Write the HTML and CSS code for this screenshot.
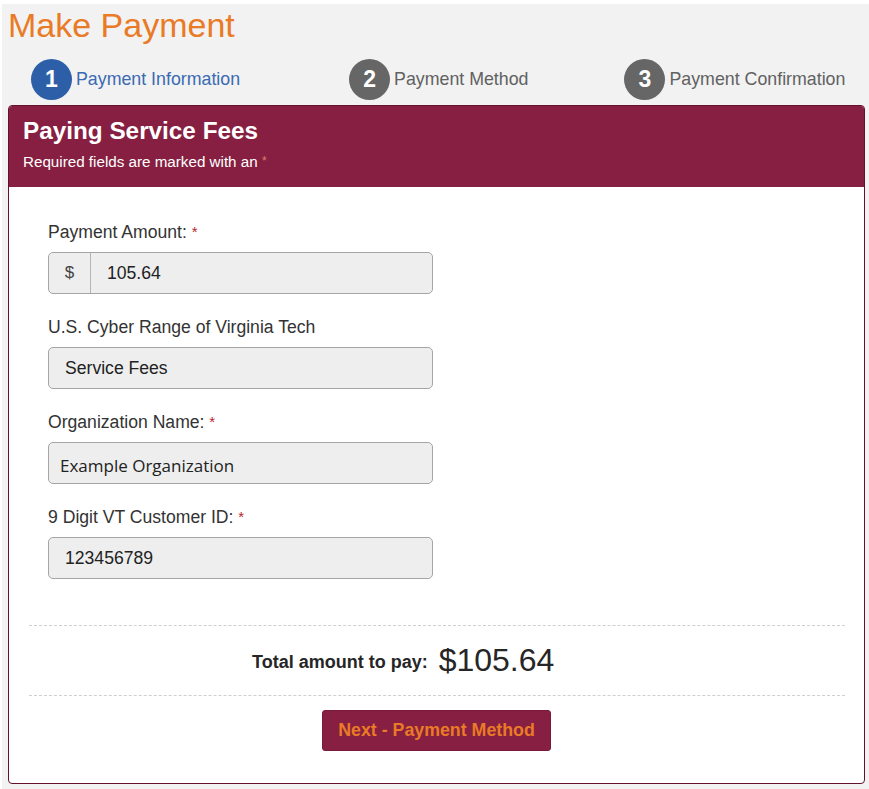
FILE: index.html
```html
<!DOCTYPE html>
<html lang="en">
<head>
    <meta charset="UTF-8">
    <meta name="viewport" content="width=device-width, initial-scale=1.0">
    <title>Make Payment</title>
    <link rel="stylesheet" href="styles.css">
</head>
<body>
    <div id="page">
        <h1>Make Payment</h1>

        <!-- Pasos del pago -->
        <div id="steps">
            <div class="step active">
                <span class="step-num">1</span>
                <span class="step-label">Payment Information</span>
            </div>
            <div class="step step-two">
                <span class="step-num">2</span>
                <span class="step-label">Payment Method</span>
            </div>
            <div class="step step-three">
                <span class="step-num">3</span>
                <span class="step-label">Payment Confirmation</span>
            </div>
        </div>

        <div id="panel">
            <div id="panel-header">
                <h2>Paying Service Fees</h2>
                <p>Required fields are marked with an <span class="req-light">*</span></p>
            </div>

            <div id="panel-body">
                <div class="field">
                    <label>Payment Amount: <span class="req">*</span></label>
                    <div class="input-group">
                        <span class="addon">$</span>
                        <span class="value">105.64</span>
                    </div>
                </div>

                <div class="field">
                    <label>U.S. Cyber Range of Virginia Tech</label>
                    <div class="input-box">Service Fees</div>
                </div>

                <div class="field">
                    <label>Organization Name: <span class="req">*</span></label>
                    <div class="input-box alt-font">Example Organization</div>
                </div>

                <div class="field">
                    <label>9 Digit VT Customer ID: <span class="req">*</span></label>
                    <div class="input-box">123456789</div>
                </div>

                <div id="total">
                    <span class="total-label">Total amount to pay:</span>
                    <span class="total-amount">$105.64</span>
                </div>

                <div id="actions">
                    <button>Next - Payment Method</button>
                </div>
            </div>
        </div>
    </div>
</body>
</html>
```

FILE: styles.css
```css
body {
    font-family: 'Liberation Sans', Arial, sans-serif;
    background-color: #fff;
    margin: 0;
    padding: 0;
}

#page {
    background-color: #f2f2f2;
    margin: 4px 0 0 2px;
    padding: 0 4px 6px 6px;
    min-height: 785px;
    box-sizing: border-box;
}

h1 {
    color: #e97a26;
    font-size: 34px;
    font-weight: normal;
    margin: 0;
    padding-top: 2px;
    line-height: 38px;
}

#steps {
    display: flex;
    align-items: center;
    margin-top: 15px;
    padding-left: 23px;
}

.step {
    display: flex;
    align-items: center;
    color: #616161;
    font-size: 17.8px;
}

.step-two {
    margin-left: 109px;
}

.step-three {
    margin-left: 96px;
}

.step-num {
    width: 41px;
    height: 41px;
    border-radius: 50%;
    background-color: #666;
    color: #fff;
    font-weight: bold;
    font-size: 23px;
    display: flex;
    align-items: center;
    justify-content: center;
    margin-right: 4px;
}

.step.active {
    color: #3a6ab3;
}

.step.active .step-num {
    background-color: #2d5fa8;
}

#panel {
    margin-top: 5px;
    border: 1px solid #66102f;
    border-radius: 4px;
    background-color: #fff;
    overflow: hidden;
}

#panel-header {
    background-color: #861f41;
    color: #fff;
    padding: 11px 14px 16px;
}

#panel-header h2 {
    margin: 0;
    font-size: 24.3px;
    line-height: 28px;
}

#panel-header p {
    margin: 7px 0 0;
    font-size: 15.2px;
    line-height: 19px;
}

.req-light {
    color: #d9826e;
    font-size: 12px;
    vertical-align: top;
}

#panel-body {
    padding: 35px 0 32px;
}

.field {
    margin: 0 0 23px 39px;
    width: 385px;
}

.field label {
    display: block;
    color: #333;
    font-size: 17.6px;
    line-height: 20px;
    margin-bottom: 10px;
}

.req {
    color: #b3262b;
    font-size: 15px;
    vertical-align: top;
}

.input-box,
.input-group {
    height: 42px;
    box-sizing: border-box;
    background-color: #eee;
    border: 1px solid #a5a5a5;
    border-radius: 5px;
    color: #222;
    font-size: 17.6px;
    display: flex;
    align-items: center;
}

.input-box {
    padding-left: 16px;
}

.alt-font {
    font-family: 'Open Sans', sans-serif;
    font-size: 17px;
    padding-left: 11px;
    padding-top: 4px;
}

.addon {
    width: 42px;
    height: 100%;
    border-right: 1px solid #b5b5b5;
    display: flex;
    align-items: center;
    justify-content: center;
    color: #444;
    font-size: 17px;
    box-sizing: border-box;
}

.value {
    padding-left: 16px;
}

#total {
    margin: 46px 19px 0 20px;
    height: 71px;
    box-sizing: border-box;
    border-top: 1px dashed #cfcfcf;
    border-bottom: 1px dashed #cfcfcf;
    display: flex;
    align-items: center;
    padding-left: 223px;
    color: #262626;
}

.total-label {
    font-weight: bold;
    font-size: 18px;
    margin-right: 11px;
    padding-top: 3px;
}

.total-amount {
    font-size: 32px;
}

#actions {
    display: flex;
    justify-content: center;
    padding-top: 14px;
}

button {
    height: 41px;
    padding: 0 15px;
    background-color: #861f41;
    color: #e97a26;
    font-family: 'Liberation Sans', Arial, sans-serif;
    font-weight: bold;
    font-size: 17.8px;
    border: 1px solid #7a1a3a;
    border-radius: 3px;
    cursor: pointer;
}
```
